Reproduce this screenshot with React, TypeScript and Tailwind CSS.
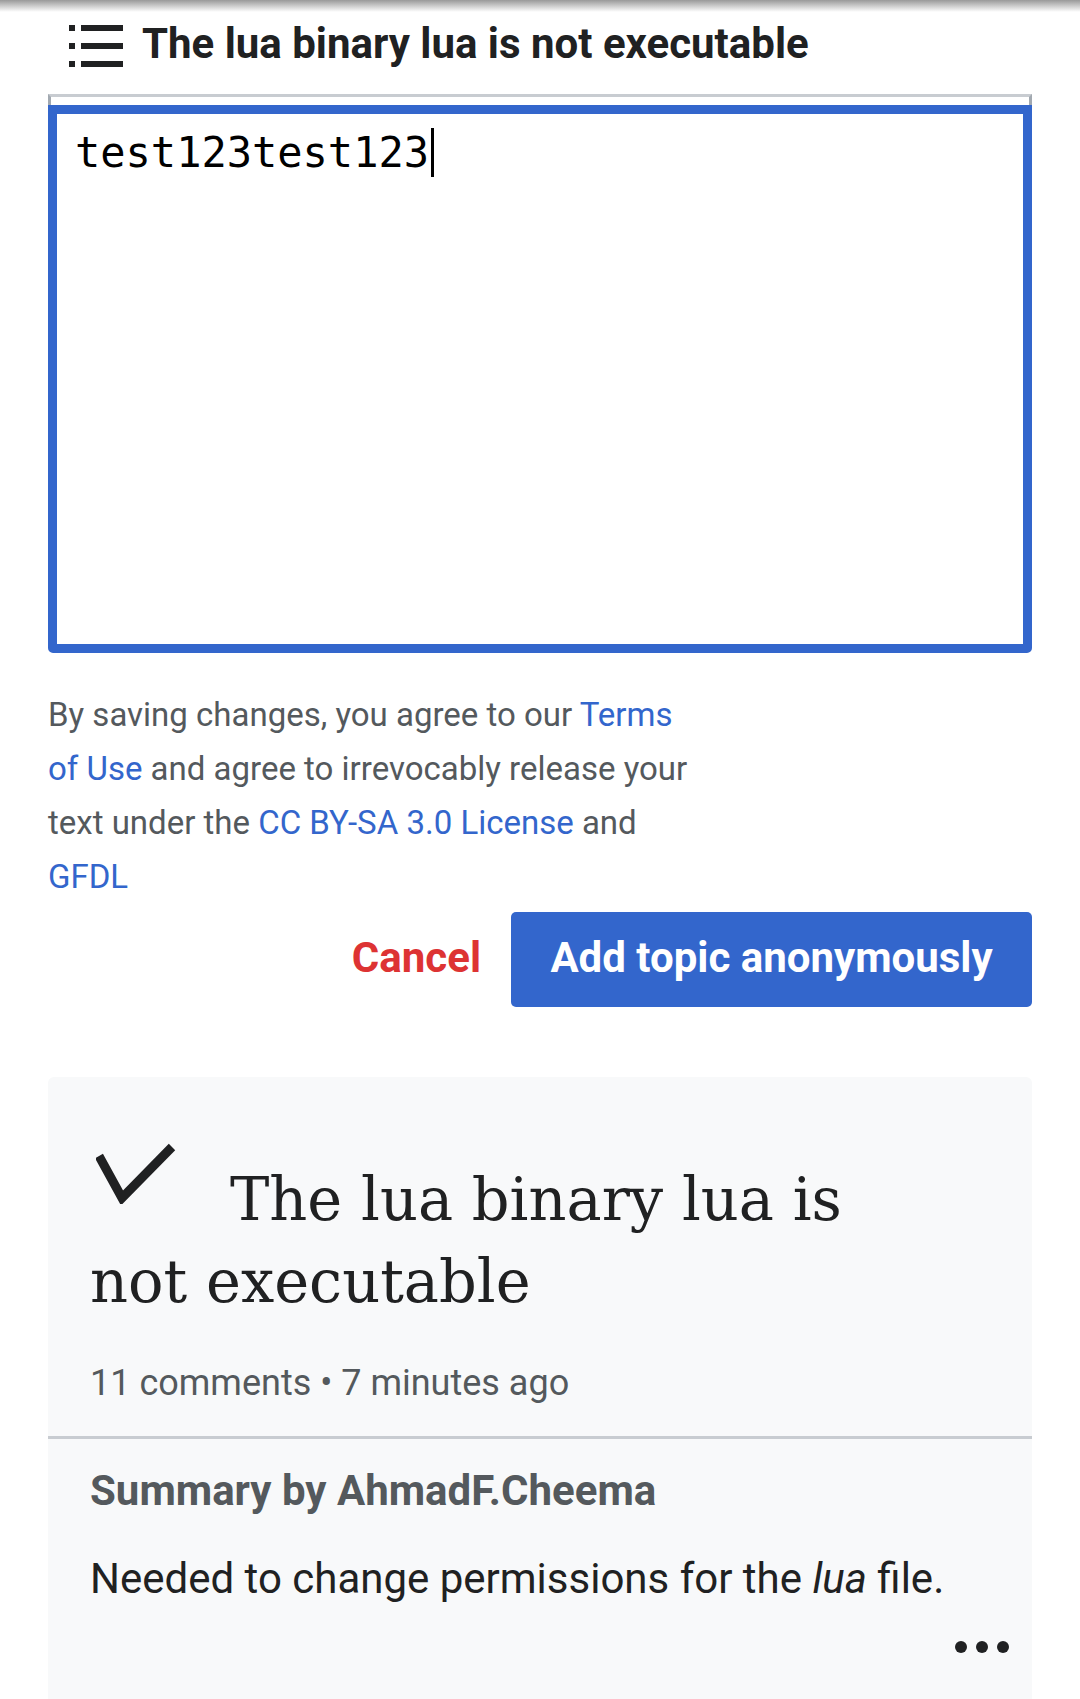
import React from 'react';

const sans = { fontFamily: 'Roboto, "Noto Sans", sans-serif' };

function ListIcon() {
  return (
    <svg width="54" height="42" viewBox="0 0 54 42" className="mt-[4px] shrink-0">
      <rect x="0" y="0" width="6" height="6" fill="#202122" />
      <rect x="12" y="0" width="42" height="6" fill="#202122" />
      <rect x="0" y="18" width="6" height="6" fill="#202122" />
      <rect x="12" y="18" width="42" height="6" fill="#202122" />
      <rect x="0" y="36" width="6" height="6" fill="#202122" />
      <rect x="12" y="36" width="42" height="6" fill="#202122" />
    </svg>
  );
}

function CheckIcon() {
  return (
    <svg width="80" height="62" viewBox="0 0 80 62" className="ml-[6px] mr-[54px] mb-[16px] inline-block align-baseline">
      <path d="M3 14 L26 56 L76 5" fill="none" stroke="#202122" strokeWidth="9" />
    </svg>
  );
}

export default function App() {
  return (
    <div className="relative h-[1699px] w-[1080px] overflow-hidden bg-white text-[#202122]" style={sans}>
      <div className="absolute left-0 right-0 top-0 h-[12px] bg-linear-to-b from-black/40 to-transparent" />

      <div className="px-[48px]">
        <header className="flex h-[94px] items-center gap-[19px] pb-[6px] pl-[21px]">
          <ListIcon />
          <h1 className="text-[42px] font-bold leading-none text-[#202122]">
            The lua binary lua is not executable
          </h1>
        </header>

        <div className="h-[11px] border-x-[3px] border-t-[3px] border-x-[#a2a9b1] border-t-[#c8ccd1]" />
        <div className="h-[548px] rounded-b-[5px] border-[9px] border-[#3366cc] bg-white pl-[18px] pt-[14px]">
          <div className="flex items-center text-[42px] leading-[48px] text-black" style={{ fontFamily: '"DejaVu Sans Mono", monospace' }}>
            <span>test123test123</span>
            <span className="ml-[2px] inline-block h-[49px] w-[3px] bg-black" />
          </div>
        </div>

        <p className="mt-[35px] text-[33px] leading-[54px] text-[#54595d]">
          <span className="block whitespace-nowrap">
            By saving changes, you agree to our <a className="text-[#3366cc]">Terms</a>
          </span>
          <span className="block whitespace-nowrap">
            <a className="text-[#3366cc]">of Use</a> and agree to irrevocably release your
          </span>
          <span className="block whitespace-nowrap">
            text under the <a className="text-[#3366cc]">CC BY-SA 3.0 License</a> and
          </span>
          <span className="block whitespace-nowrap">
            <a className="text-[#3366cc]">GFDL</a>
          </span>
        </p>

        <div className="mt-[8px] flex items-center justify-end gap-[30px]">
          <button className="pb-[4px] text-[42px] font-bold text-[#d33]">Cancel</button>
          <button className="h-[95px] w-[521px] rounded-[5px] bg-[#3366cc] pb-[4px] text-[42px] font-bold text-white">
            Add topic anonymously
          </button>
        </div>

        <section className="mt-[70px] h-[700px] rounded-t-[6px] bg-[#f8f9fa]">
          <div className="px-[42px] pt-[65px]">
            <h2 className="text-[59px] leading-[82px] text-[#202122]" style={{ fontFamily: '"DejaVu Serif", serif' }}>
              <CheckIcon />
              The lua binary lua is
              <br />
              not executable
            </h2>
            <div className="mt-[40px] pb-[33px] text-[36px] leading-[40px] text-[#54595d]">
              11 comments • 7 minutes ago
            </div>
          </div>
          <div className="h-[3px] bg-[#c8ccd1]" />
          <div className="px-[42px] pt-[28px]">
            <div className="text-[42px] font-bold leading-[48px] text-[#54595d]">Summary by AhmadF.Cheema</div>
            <p className="mt-[40px] text-[42px] leading-[48px] text-[#202122]">
              Needed to change permissions for the <i>lua</i> file.
            </p>
          </div>
          <div className="flex justify-end gap-[9px] pr-[23px] pt-[38px]">
            <span className="h-[12px] w-[12px] rounded-full bg-[#202122]" />
            <span className="h-[12px] w-[12px] rounded-full bg-[#202122]" />
            <span className="h-[12px] w-[12px] rounded-full bg-[#202122]" />
          </div>
        </section>
      </div>
    </div>
  );
}
